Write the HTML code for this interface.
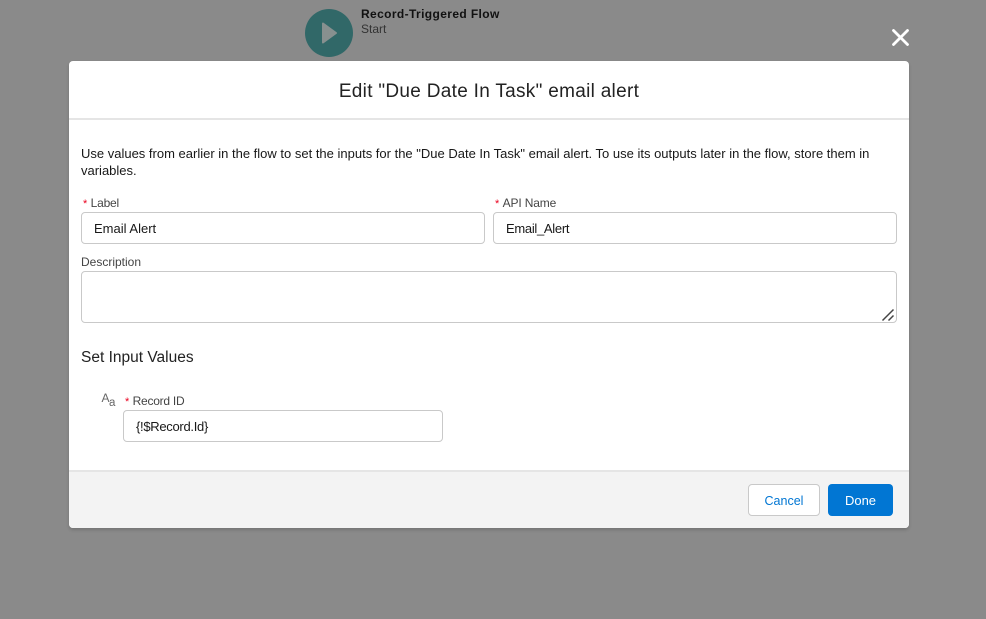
<!DOCTYPE html>
<html>
<head>
<meta charset="utf-8">
<style>
html,body{margin:0;padding:0;width:986px;height:619px;overflow:hidden;background:#8a8a8a;font-family:"Liberation Sans",sans-serif;color:#181818}
.t{position:absolute;white-space:nowrap;font-size:12px;line-height:16px}
.box{position:absolute;box-sizing:border-box;background:#fff;border:1px solid #c9c9c9;border-radius:4px}
.req{color:#ea001e;font-size:11px}
.lbl{color:#444}
.in{font-size:13px;color:#181818}
</style>
</head>
<body>
<div style="position:absolute;left:305px;top:9px;width:48px;height:48px;border-radius:50%;background:#316868"></div>
<svg style="position:absolute;left:305px;top:9px" width="48" height="48"><path d="M18 14.5 L31 24 L18 33.5 Z" fill="#87908f" stroke="#87908f" stroke-width="2" stroke-linejoin="round"/></svg>
<div class="t" style="left:361px;top:6px;font-weight:bold;color:#111;letter-spacing:.38px">Record-Triggered Flow</div>
<div class="t" style="left:361px;top:21px;color:#333">Start</div>
<svg style="position:absolute;left:891px;top:27px" width="20" height="20"><path d="M2.5 3.5 L16.5 17.5 M16.5 3.5 L2.5 17.5" stroke="#fff" stroke-width="2.8" stroke-linecap="round"/></svg>

<div style="position:absolute;left:69px;top:61px;width:840px;height:467px;background:#fff;border-radius:4px;box-shadow:0 2px 3px rgba(0,0,0,.16);overflow:hidden">
  <div style="position:absolute;left:0;top:57px;width:840px;height:2px;background:#e5e5e5"></div>
  <div style="position:absolute;left:0;top:409px;width:840px;height:58px;background:#f3f3f3;border-top:2px solid #e5e5e5;box-sizing:border-box"></div>
</div>
<div class="t" style="left:69px;width:840px;text-align:center;top:81px;font-size:19px;line-height:22px;letter-spacing:.3px;color:#222">Edit "Due Date In Task" email alert</div>
<div class="t" style="left:81px;top:146px;font-size:13px">Use values from earlier in the flow to set the inputs for the "Due Date In Task" email alert. To use its outputs later in the flow, store them in</div>
<div class="t" style="left:81px;top:163px;font-size:13px">variables.</div>

<div class="t lbl" style="left:83px;top:195px"><span class="req">*</span> <span style="letter-spacing:-.2px">Label</span></div>
<div class="box" style="left:81px;top:212px;width:404px;height:32px"></div>
<div class="t in" style="left:94px;top:221px">Email Alert</div>

<div class="t lbl" style="left:495px;top:195px"><span class="req">*</span> <span style="letter-spacing:-.15px">API Name</span></div>
<div class="box" style="left:493px;top:212px;width:404px;height:32px"></div>
<div class="t in" style="left:506px;top:221px;letter-spacing:-.3px">Email_Alert</div>

<div class="t lbl" style="left:81px;top:254px">Description</div>
<div class="box" style="left:81px;top:271px;width:816px;height:52px"></div>
<svg style="position:absolute;left:880px;top:307px" width="16" height="16"><path d="M2.5 13.5 L13.5 2.5 M8.5 13.5 L13.5 8.5" stroke="#444" stroke-width="1.5"/></svg>

<div class="t" style="left:81px;top:349px;font-size:15.5px;line-height:18px;color:#222">Set Input Values</div>

<div class="t" style="left:101.5px;top:391px;font-size:12px;line-height:14px;color:#666">A</div>
<div class="t" style="left:109px;top:396px;font-size:11.5px;line-height:14px;color:#666">a</div>
<div class="t lbl" style="left:125px;top:393px"><span class="req">*</span> <span style="letter-spacing:-.25px">Record ID</span></div>
<div class="box" style="left:123px;top:410px;width:320px;height:32px"></div>
<div class="t in" style="left:136px;top:419px;letter-spacing:-.3px">{!$Record.Id}</div>

<div class="box" style="left:748px;top:484px;width:72px;height:32px;text-align:center;font-size:12.5px;line-height:32px;color:#0176d3">Cancel</div>
<div style="position:absolute;left:828px;top:484px;width:65px;height:32px;background:#0176d3;border-radius:4px;text-align:center;font-size:13px;line-height:33px;color:#fff">Done</div>
</body>
</html>
